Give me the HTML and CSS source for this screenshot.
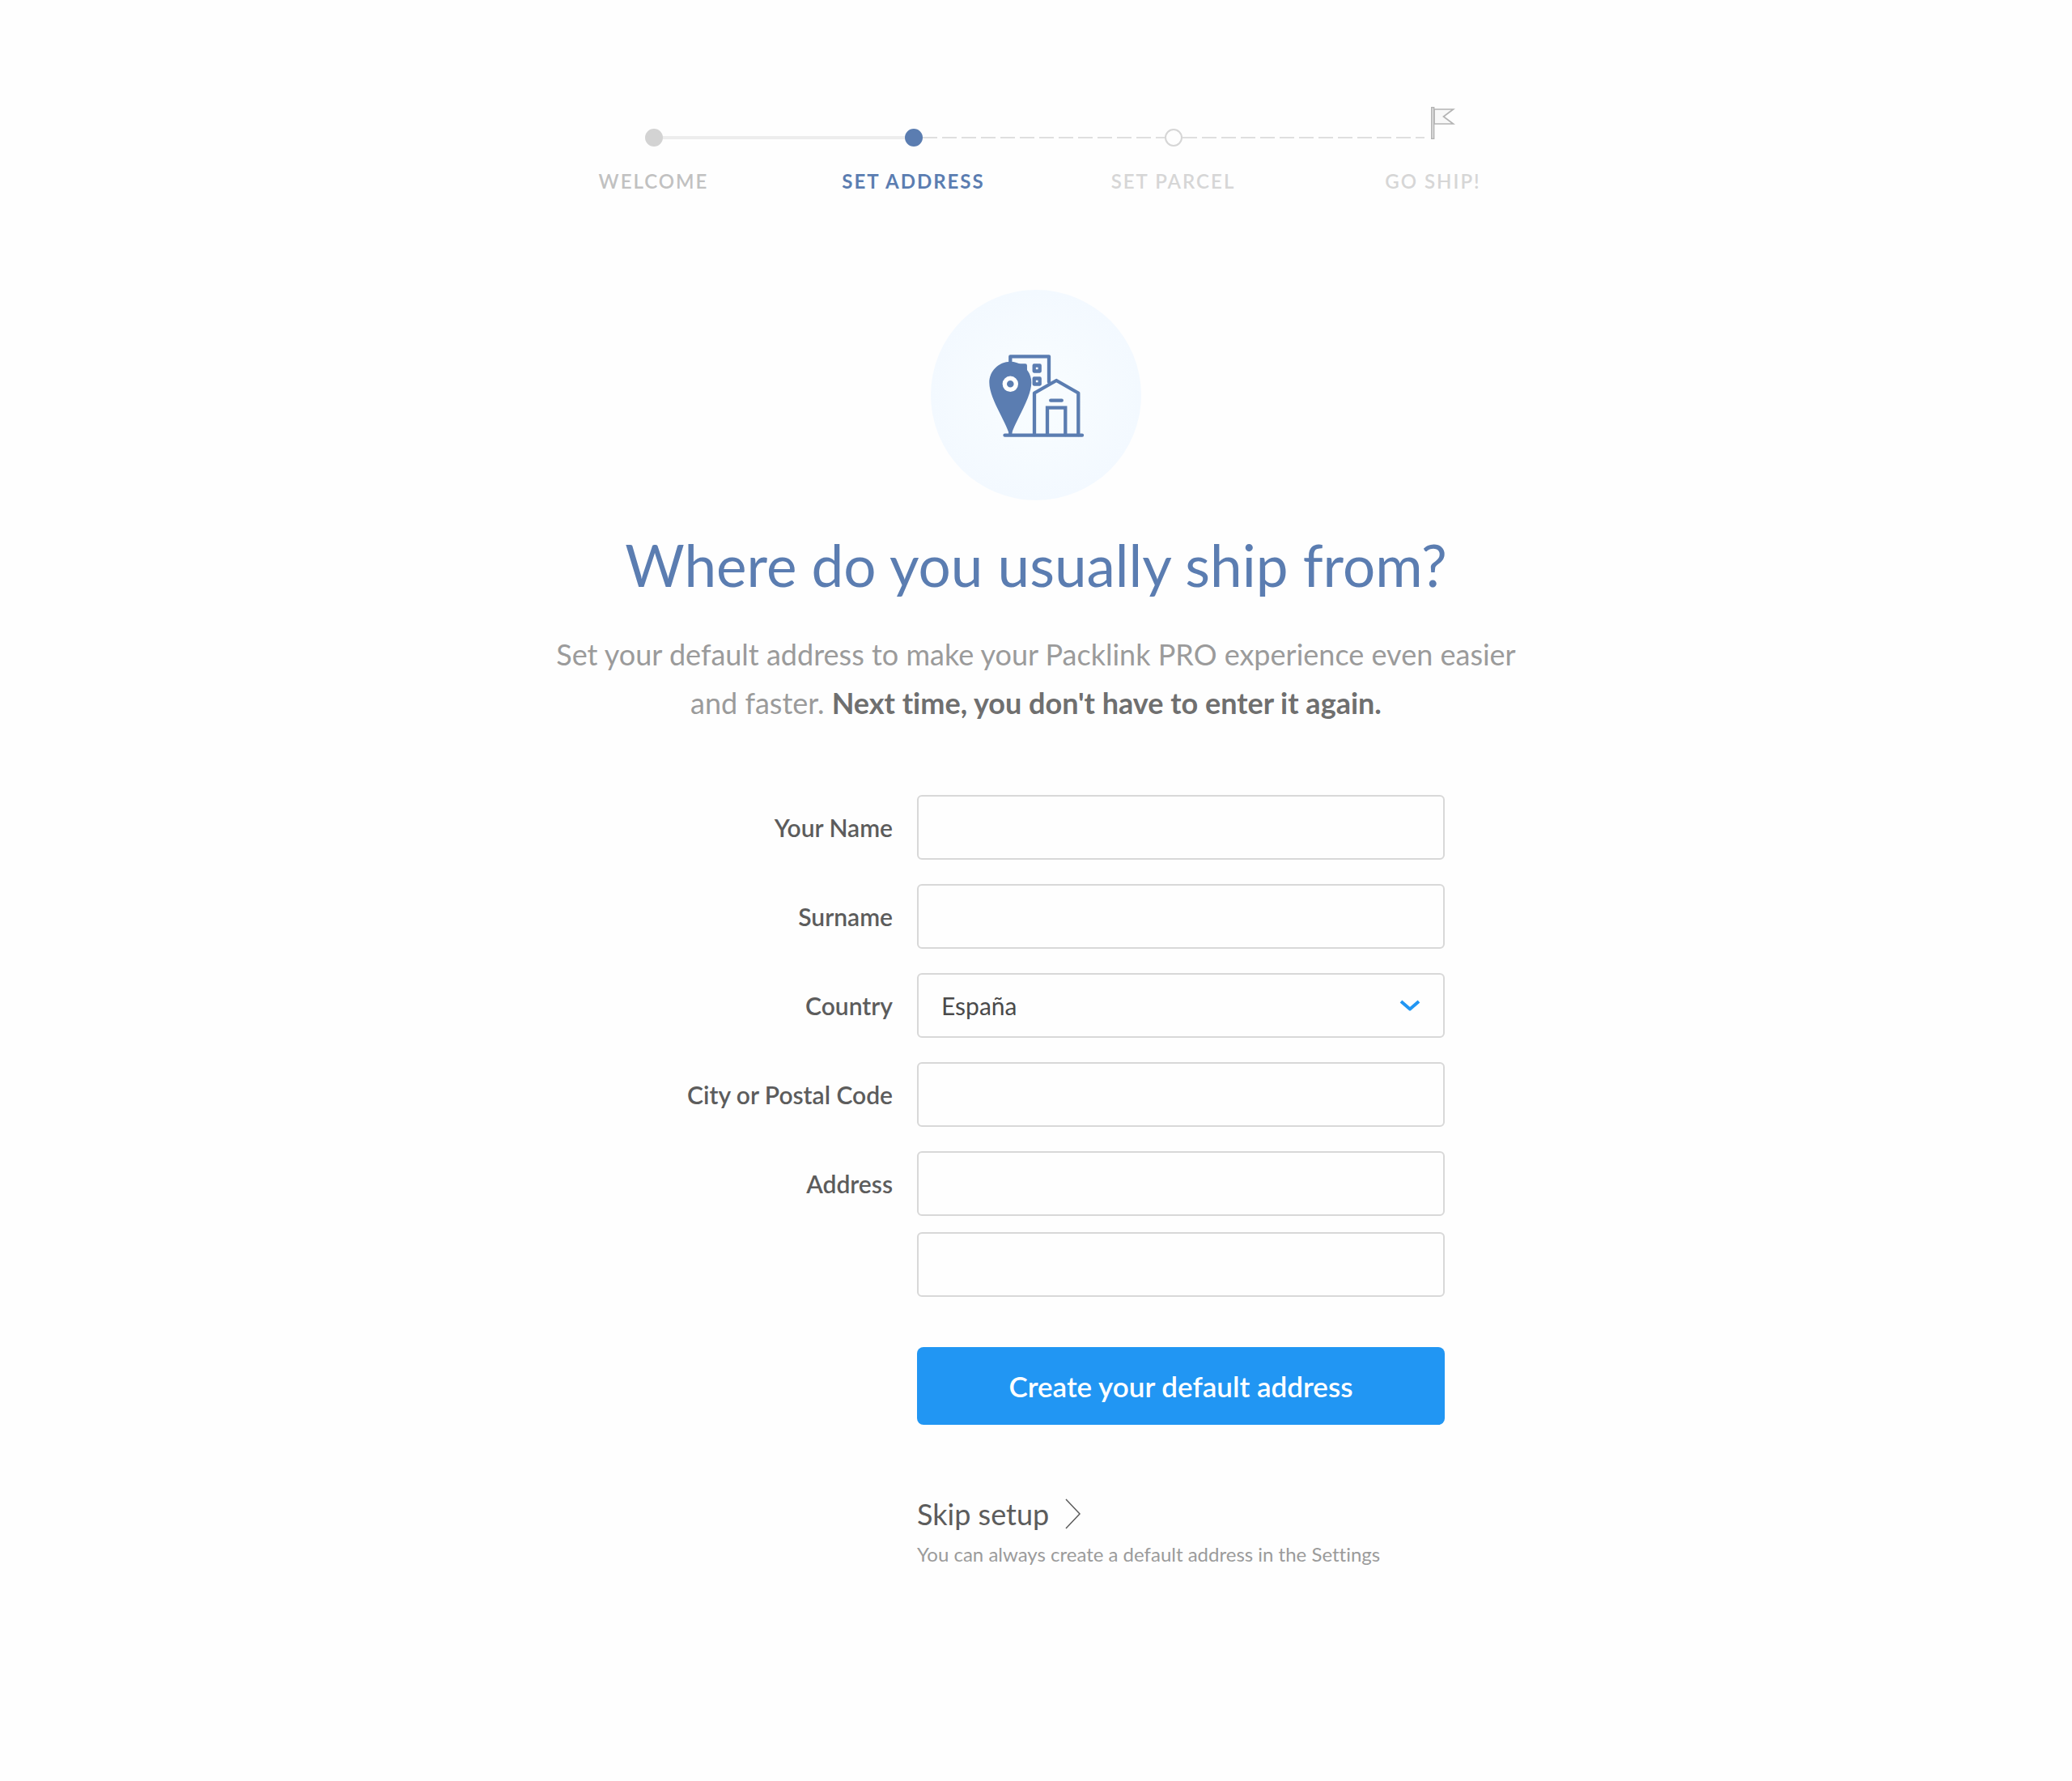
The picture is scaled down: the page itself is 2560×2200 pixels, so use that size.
FILE: index.html
```html
<!DOCTYPE html>
<html lang="en">
<head>
  <meta charset="utf-8">
  <meta name="viewport" content="width=device-width, initial-scale=1">
  <title>Set your default address</title>
  <link rel="stylesheet" href="styles.css">
</head>
<body>
  <main class="setup">
    <ol class="steps">
      <li class="step step-done">
        <div class="track"><span class="dot"></span><span class="line line-solid"></span></div>
        <span class="step-label">WELCOME</span>
      </li>
      <li class="step step-current" aria-current="step">
        <div class="track"><span class="dot"></span><span class="line line-dashed"></span></div>
        <span class="step-label">SET ADDRESS</span>
      </li>
      <li class="step">
        <div class="track"><span class="dot"></span><span class="line line-dashed"></span></div>
        <span class="step-label">SET PARCEL</span>
      </li>
      <li class="step">
        <div class="track">
          <svg class="flag" width="38" height="80" viewBox="0 0 38 80" aria-hidden="true">
            <path d="M12 5H35.500L23.500 14L35.500 23H12Z" fill="#f8f8f8" stroke="#b4b4b4" stroke-width="1.700"/>
            <rect x="8.700" y="2.700" width="3" height="38.600" fill="#dedede" stroke="#b4b4b4" stroke-width="1.400"/>
          </svg>
        </div>
        <span class="step-label">GO SHIP!</span>
      </li>
    </ol>

    <svg class="hero" viewBox="0 0 260 260" aria-hidden="true">
      <defs>
        <radialGradient id="halo">
          <stop offset="0" stop-color="#f9fdff"/>
          <stop offset="1" stop-color="#f3f9ff"/>
        </radialGradient>
      </defs>
      <circle cx="130" cy="130" r="130" fill="url(#halo)"/>
      <g fill="none" stroke="#5b7db1" stroke-width="4.300" stroke-linecap="round" stroke-linejoin="round">
        <path d="M91.500 179.700H187"/>
        <path d="M98.300 178V82.300H146V114"/>
        <rect x="127.700" y="93.500" width="7" height="7"/>
        <rect x="127.700" y="109.500" width="7" height="7"/>
        <rect x="109.500" y="93.500" width="7.300" height="7"/>
        <path d="M128 179V127.500L155.200 112L182.300 127.500V179"/>
        <path d="M148.200 136.700H161.800"/>
        <path d="M144 179V145.700H166.300V179" stroke-linejoin="miter"/>
      </g>
      <path d="M98.300 88.700C83.700 88.700 72.300 100.500 72.300 114.500C72.300 133 91 160 97 178H99.700C105.600 160 124.300 133 124.300 114.500C124.300 100.500 112.900 88.700 98.300 88.700Z" fill="#5b7db1"/>
      <circle cx="98.300" cy="116.300" r="7" fill="#5b7db1" stroke="#fff" stroke-width="5.400"/>
    </svg>

    <h1 class="title">Where do you usually ship from?</h1>
    <p class="intro">Set your default address to make your Packlink PRO experience even easier and faster. <strong>Next time, you don't have to enter it again.</strong></p>

    <form class="form">
      <label class="label" for="name">Your Name</label>
      <input class="control" id="name" type="text">

      <label class="label" for="surname">Surname</label>
      <input class="control" id="surname" type="text">

      <label class="label" for="country">Country</label>
      <div class="select">
        <select class="control" id="country">
          <option>España</option>
        </select>
        <svg class="caret" width="26" height="16" viewBox="0 0 26 16" aria-hidden="true">
          <path d="M2 3L13 12.500L24 3" fill="none" stroke="#2196f3" stroke-width="4" stroke-linejoin="round"/>
        </svg>
      </div>

      <label class="label" for="city">City or Postal Code</label>
      <input class="control" id="city" type="text">

      <label class="label" for="address">Address</label>
      <div class="stack">
        <input class="control" id="address" type="text">
        <input class="control" type="text" aria-label="Address, second line">
      </div>

      <div class="actions">
        <button class="submit" type="submit">Create your default address</button>
        <a class="skip" href="#">Skip setup
          <svg width="20" height="38" viewBox="0 0 20 38" aria-hidden="true">
            <path d="M1 1L18 19L1 37" fill="none" stroke="#5c5c5c" stroke-width="1.500"/>
          </svg>
        </a>
        <p class="hint">You can always create a default address in the Settings</p>
      </div>
    </form>
  </main>
</body>
</html>
```

FILE: styles.css
```css
*,
*::before,
*::after {
  box-sizing: border-box;
}

body {
  margin: 0;
  background: #fefefe;
  color: #5c5c5c;
  font-family: Lato, "Liberation Sans", sans-serif;
  font-size: 30px;
  font-variant-ligatures: none;
}

.setup {
  display: flex;
  flex-direction: column;
  align-items: center;
  padding: 130px 24px;
}

/* Progress steps */
.steps {
  display: grid;
  grid-template-columns: repeat(4, 1fr);
  width: 100%;
  max-width: 1302px;
  margin: 0;
  padding: 0 0 0 18px;
  list-style: none;
}

.step {
  display: flex;
  flex-direction: column;
  color: #d6d6d6;
  text-align: center;
}

.track {
  display: grid;
  grid-template-columns: 1fr 22px 1fr;
  align-items: center;
  height: 80px;
}

.dot {
  grid-column: 2;
  height: 22px;
  border: 2px solid #d6d6d6;
  border-radius: 50%;
}

.flag {
  grid-column: 2;
}

/* Reaches across the next step's left half, up to its marker */
.line {
  margin-right: -100%;
}

.line-solid {
  height: 4px;
  background: #ededed;
}

.line-dashed {
  height: 2px;
  background: repeating-linear-gradient(to right, #dfdfdf 0 18px, transparent 18px 24px);
}

.step-label {
  font-size: 24px;
  font-weight: 600;
  line-height: 28px;
  letter-spacing: 2px;
}

.step-done {
  color: #c1c1c1;
}

.step-done .dot {
  border-color: #d3d3d3;
  background: #d3d3d3;
}

.step-current {
  color: #5b7db1;
}

.step-current .dot {
  border-color: #5b7db1;
  background: #5b7db1;
}

.step-current .step-label {
  font-weight: 700;
}

/* Introduction */
.hero {
  width: 260px;
  height: 260px;
  margin-top: 120px;
}

.title {
  margin: 38px 0 0;
  color: #5b7db1;
  font-size: 71px;
  font-weight: 400;
  line-height: 84px;
  text-align: center;
}

.intro {
  max-width: 1230px;
  margin: 38px 0 0;
  color: #9b9b9b;
  font-size: 36px;
  line-height: 60px;
  text-align: center;
}

.intro strong {
  color: #6f6f6f;
  font-weight: 700;
}

/* Address form */
.form {
  display: grid;
  grid-template-columns: 1fr minmax(0, 652px);
  gap: 30px;
  width: 100%;
  max-width: 1010px;
  margin-top: 84px;
}

.label {
  font-weight: 600;
  line-height: 80px;
  text-align: right;
}

.control {
  width: 100%;
  height: 80px;
  padding: 0 28px;
  border: 2px solid #d8d8d8;
  border-radius: 6px;
  background: #fefefe;
  color: #4a4a4a;
  font: inherit;
  appearance: none;
}

.select {
  display: grid;
  align-items: center;
}

.select > * {
  grid-area: 1 / 1;
}

.caret {
  justify-self: end;
  margin-right: 30px;
  pointer-events: none;
}

.stack {
  display: grid;
  gap: 20px;
}

.actions {
  grid-column: 2;
  display: flex;
  flex-direction: column;
  align-items: flex-start;
  padding-top: 32px;
}

.submit {
  width: 100%;
  height: 96px;
  border: 0;
  border-radius: 8px;
  background: #2196f3;
  color: #fff;
  font: inherit;
  font-size: 35px;
  font-weight: 600;
}

.skip {
  display: flex;
  align-items: center;
  gap: 20px;
  margin-top: 88px;
  color: #5c5c5c;
  font-size: 36px;
  line-height: 44px;
  text-decoration: none;
}

.hint {
  margin: 12px 0 0;
  color: #9b9b9b;
  font-size: 24px;
  line-height: 32px;
}

@media (max-width: 900px) {
  .form {
    grid-template-columns: 1fr;
  }

  .label {
    line-height: 36px;
    text-align: left;
  }

  .actions {
    grid-column: 1;
  }
}
```
